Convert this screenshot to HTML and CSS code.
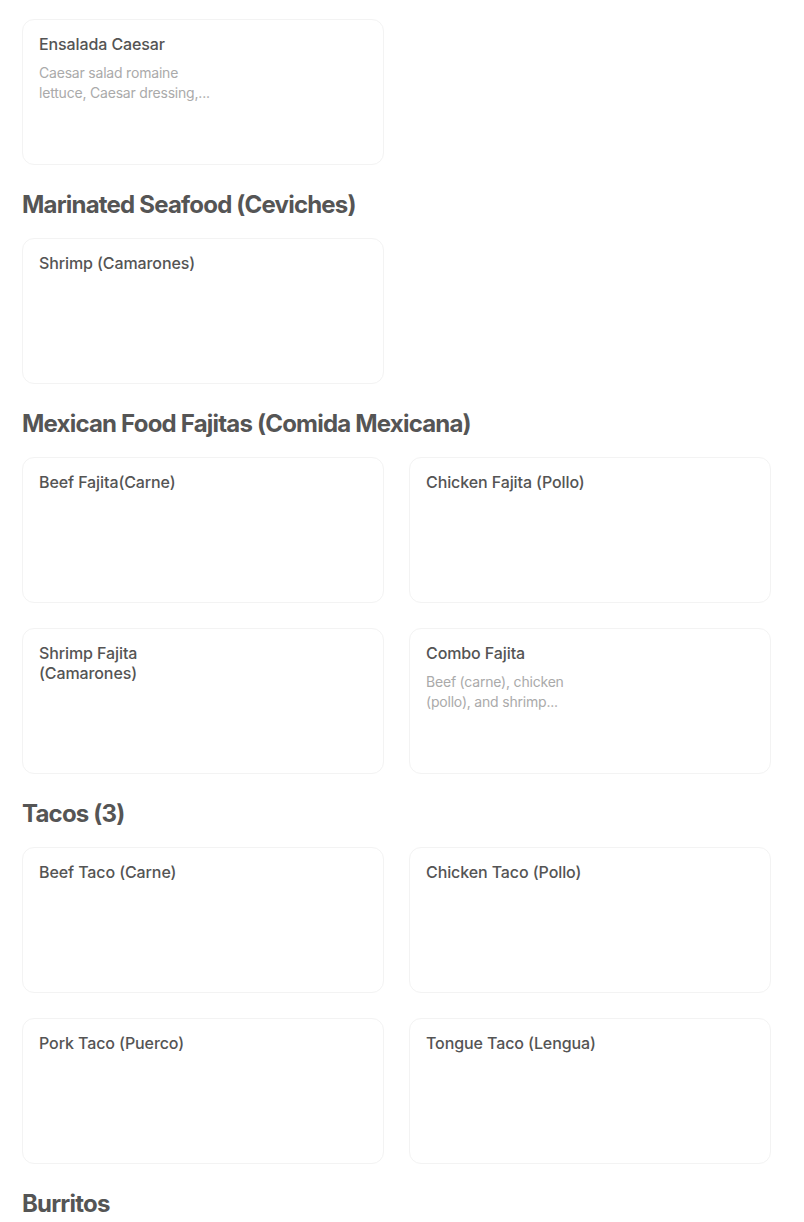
FILE: index.html
```html
<!DOCTYPE html>
<html lang="en">
<head>
<meta charset="utf-8">
<title>Menu</title>
<link rel="stylesheet" href="styles.css">
</head>
<body>
<main class="menu">
  <section class="section section-first">
    <div class="grid">
      <div class="card">
        <div class="card-text">
          <div class="card-title">Ensalada Caesar</div>
          <div class="card-desc">Caesar salad romaine lettuce, Caesar dressing,...</div>
        </div>
      </div>
    </div>
  </section>

  <section class="section">
    <h2 class="section-title">Marinated Seafood (Ceviches)</h2>
    <div class="grid">
      <div class="card">
        <div class="card-text">
          <div class="card-title">Shrimp (Camarones)</div>
        </div>
      </div>
    </div>
  </section>

  <section class="section">
    <h2 class="section-title">Mexican Food Fajitas (Comida Mexicana)</h2>
    <div class="grid">
      <div class="card">
        <div class="card-text">
          <div class="card-title">Beef Fajita(Carne)</div>
        </div>
      </div>
      <div class="card">
        <div class="card-text">
          <div class="card-title">Chicken Fajita (Pollo)</div>
        </div>
      </div>
      <div class="card">
        <div class="card-text">
          <div class="card-title">Shrimp Fajita (Camarones)</div>
        </div>
      </div>
      <div class="card">
        <div class="card-text">
          <div class="card-title">Combo Fajita</div>
          <div class="card-desc">Beef (carne), chicken (pollo), and shrimp...</div>
        </div>
      </div>
    </div>
  </section>

  <section class="section">
    <h2 class="section-title">Tacos (3)</h2>
    <div class="grid">
      <div class="card">
        <div class="card-text">
          <div class="card-title">Beef Taco (Carne)</div>
        </div>
      </div>
      <div class="card">
        <div class="card-text">
          <div class="card-title">Chicken Taco (Pollo)</div>
        </div>
      </div>
      <div class="card">
        <div class="card-text">
          <div class="card-title">Pork Taco (Puerco)</div>
        </div>
      </div>
      <div class="card">
        <div class="card-text">
          <div class="card-title">Tongue Taco (Lengua)</div>
        </div>
      </div>
    </div>
  </section>

  <section class="section">
    <h2 class="section-title">Burritos</h2>
  </section>
</main>
</body>
</html>
```

FILE: styles.css
```css
html, body {
  margin: 0;
  padding: 0;
  background: #ffffff;
}

body {
  font-family: Inter, "Noto Sans", "Liberation Sans", sans-serif;
  color: #545454;
  overflow: hidden;
}

.menu {
  width: 749px;
  padding: 19px 0 0 22px;
}

.section {
  margin-top: 24px;
}

.section-first {
  margin-top: 0;
}

.section-title {
  margin: 0 0 17px 0;
  font-size: 24px;
  line-height: 32px;
  font-weight: 700;
  letter-spacing: -0.8px;
  color: #555555;
}

.grid {
  display: grid;
  grid-template-columns: 362px 362px;
  column-gap: 25px;
  row-gap: 25px;
}

.card {
  box-sizing: border-box;
  height: 146px;
  border: 1px solid #f3f3f3;
  border-radius: 12px;
  padding: 14px 16px;
  display: flex;
}

.card-text {
  width: 180px;
  display: flex;
  flex-direction: column;
  gap: 9px;
}

.card-title {
  font-size: 16px;
  line-height: 20px;
  font-weight: 500;
  letter-spacing: -0.1px;
  color: #545454;
}

.card-desc {
  font-size: 14px;
  line-height: 20px;
  font-weight: 400;
  letter-spacing: -0.2px;
  color: #aaaaaa;
}
```
